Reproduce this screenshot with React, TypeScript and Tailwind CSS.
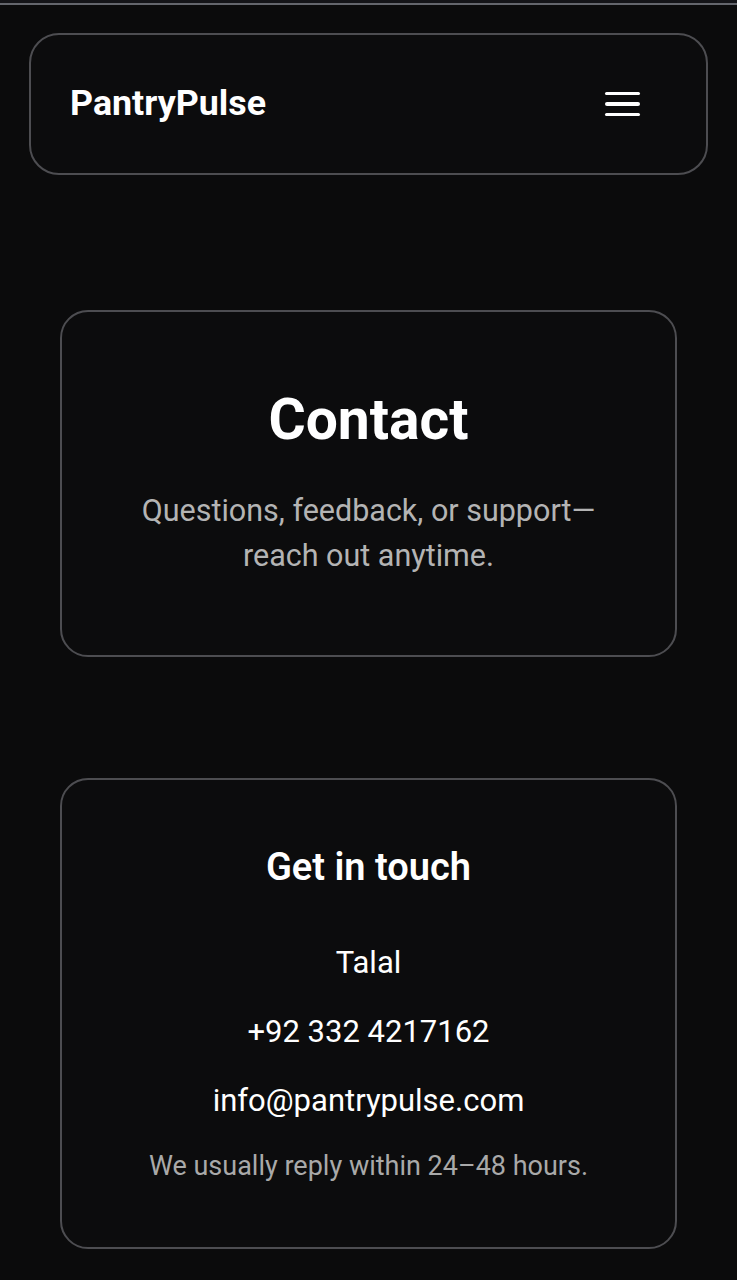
import React from "react";

function Menu() {
  return (
    <button aria-label="Open menu" className="flex flex-col gap-[7px] py-1">
      <span className="block h-[3.5px] w-[35px] rounded-full bg-white" />
      <span className="block h-[3.5px] w-[35px] rounded-full bg-white" />
      <span className="block h-[3.5px] w-[35px] rounded-full bg-white" />
    </button>
  );
}

export default function App() {
  return (
    <div
      className="min-h-[1280px] bg-[#0b0b0c] text-white"
      style={{ fontFamily: "Roboto, 'Noto Sans', sans-serif" }}
    >
      {/* top edge */}
      <div className="h-[3px] bg-[#141418]" />
      <div className="h-[2px] bg-[#64666d]" />

      <div className="px-[29px] pt-[28px]">
        <header className="flex h-[142px] items-center justify-between rounded-[30px] border-2 border-[#4d4d51] bg-[#0c0c0d] pl-[39px] pr-[66px]">
          <span className="text-[35.8px] font-bold leading-none">
            PantryPulse
          </span>
          <Menu />
        </header>

        <main className="px-[31px]">
          <section className="mt-[135px] rounded-[28px] border-2 border-[#4d4d51] bg-[#0c0c0d] px-6 pt-[74px] pb-[77px] text-center">
            <h1 className="text-[57px] font-bold leading-[68px]">Contact</h1>
            <p className="mx-auto mt-[34px] max-w-[480px] text-[30.5px] leading-[45px] text-[#b4b4b4]">
              Questions, feedback, or support—reach out anytime.
            </p>
          </section>

          <section className="mt-[121px] rounded-[28px] border-2 border-[#4d4d51] bg-[#0c0c0d] px-6 pt-[65px] pb-[63px] text-center">
            <h2 className="text-[38px] font-semibold leading-[44px]">
              Get in touch
            </h2>
            <div className="mt-[54px] flex flex-col gap-[29px] text-[31px] leading-[40px]">
              <p>Talal</p>
              <p>+92 332 4217162</p>
              <p>info@pantrypulse.com</p>
            </div>
            <p className="mt-[27px] text-[27px] leading-[36px] text-[#a9a9a9]">
              We usually reply within 24–48 hours.
            </p>
          </section>
        </main>
      </div>
    </div>
  );
}
